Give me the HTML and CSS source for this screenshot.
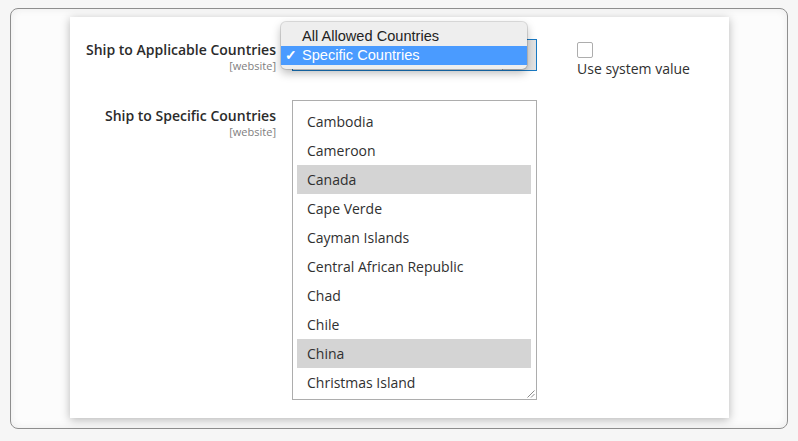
FILE: index.html
```html
<!DOCTYPE html>
<html>
<head>
<meta charset="utf-8">
<link rel="stylesheet" href="styles.css">
</head>
<body>
<div class="frame">
  <div class="panel">
    <div class="form">
      <div class="label">
        <span class="label-text">Ship to Applicable Countries</span>
        <span class="scope">[website]</span>
      </div>
      <div class="control">
        <div class="select">
          <div class="select-value"></div>
          <div class="select-arrow"></div>
          <div class="menu">
            <div class="menu-item">All Allowed Countries</div>
            <div class="menu-item selected"><span class="check">✓</span>Specific Countries</div>
          </div>
        </div>
      </div>
      <div class="use-default">
        <span class="checkbox"></span>
        <span class="use-text">Use system value</span>
      </div>

      <div class="label label-second">
        <span class="label-text">Ship to Specific Countries</span>
        <span class="scope">[website]</span>
      </div>
      <div class="control control-second">
        <div class="multiselect">
          <div class="option">Cambodia</div>
          <div class="option">Cameroon</div>
          <div class="option chosen">Canada</div>
          <div class="option">Cape Verde</div>
          <div class="option">Cayman Islands</div>
          <div class="option">Central African Republic</div>
          <div class="option">Chad</div>
          <div class="option">Chile</div>
          <div class="option chosen">China</div>
          <div class="option">Christmas Island</div>
          <svg class="grip" width="9" height="9" viewBox="0 0 9 9">
            <path d="M8.5 1.5 L1.5 8.5 M8.5 5 L5 8.5" stroke="#8a8a8a" stroke-width="1" fill="none"/>
          </svg>
        </div>
      </div>
      <div></div>
    </div>
  </div>
</div>
</body>
</html>
```
FILE: styles.css
```css
* { box-sizing: border-box; }
html, body { margin: 0; padding: 0; }
body {
  background: #f6f6f6;
  width: 798px;
  height: 441px;
  overflow: hidden;
  padding: 8px 10px 0 10px;
  font-family: "Open Sans", "Liberation Sans", sans-serif;
  color: #303030;
}
.frame {
  width: 778px;
  height: 421px;
  border: 1px solid #8e8e8e;
  border-radius: 8px;
  background: #fcfcfc;
  box-shadow: inset 0 0 9px rgba(0,0,0,0.07);
  padding: 8px 0 0 59px;
}
.panel {
  width: 659px;
  height: 401px;
  background: #fff;
  box-shadow: 0 2px 9px rgba(0,0,0,0.28);
}
.form {
  display: grid;
  grid-template-columns: 206px 245px auto;
  column-gap: 16px;
  padding-top: 22px;
}
.label {
  display: flex;
  flex-direction: column;
  align-items: flex-end;
  padding-top: 2px;
}
.label-text {
  font-weight: 600;
  font-size: 14px;
  line-height: 18px;
  color: #2b2b2b;
}
.scope {
  font-size: 11px;
  line-height: 13px;
  color: #808080;
}
.label-second { padding-top: 7px; margin-top: 21px; }
.control-second { margin-top: 21px; }
.select {
  position: relative;
  height: 32px;
  border: 1px solid #1979c3;
  display: flex;
}
.select-value {
  flex: 1;
}
.select-arrow {
  width: 34px;
  background: #e3e3e3;
  border-left: 1px solid #adadad;
}
.menu {
  position: absolute;
  left: -12px;
  top: -18px;
  width: 246px;
  height: 47px;
  background: #eeeeee;
  border-radius: 5px;
  box-shadow: 0 0 0 1px rgba(0,0,0,0.12), 0 4px 10px rgba(0,0,0,0.28);
  padding: 4px 0 3px;
  font-family: "Liberation Sans", "Noto Sans", sans-serif;
  font-size: 14.6px;
  color: #222;
}
.menu-item {
  height: 20px;
  line-height: 20px;
  padding-left: 21px;
  position: relative;
}
.menu-item.selected {
  background: #4a9bff;
  color: #fff;
  height: 19px;
  line-height: 18px;
}
.check {
  position: absolute;
  left: 4px;
  top: 0;
  font-size: 14px;
  font-weight: bold;
}
.use-default {
  display: flex;
  flex-direction: column;
  padding-left: 24px;
  padding-top: 3px;
}
.checkbox {
  width: 16px;
  height: 16px;
  border: 1px solid #adadad;
  border-radius: 2px;
  background: #fff;
}
.use-text {
  font-size: 14px;
  line-height: 20px;
  margin-top: 1px;
  color: #303030;
}
.multiselect {
  position: relative;
  height: 300px;
  border: 1px solid #adadad;
  padding: 6px 5px 0 4px;
}
.option {
  height: 29px;
  line-height: 29px;
  padding-left: 10px;
  font-size: 14px;
  color: #303030;
}
.option.chosen { background: #d4d4d4; }
.grip {
  position: absolute;
  right: 1px;
  bottom: 1px;
}
```
